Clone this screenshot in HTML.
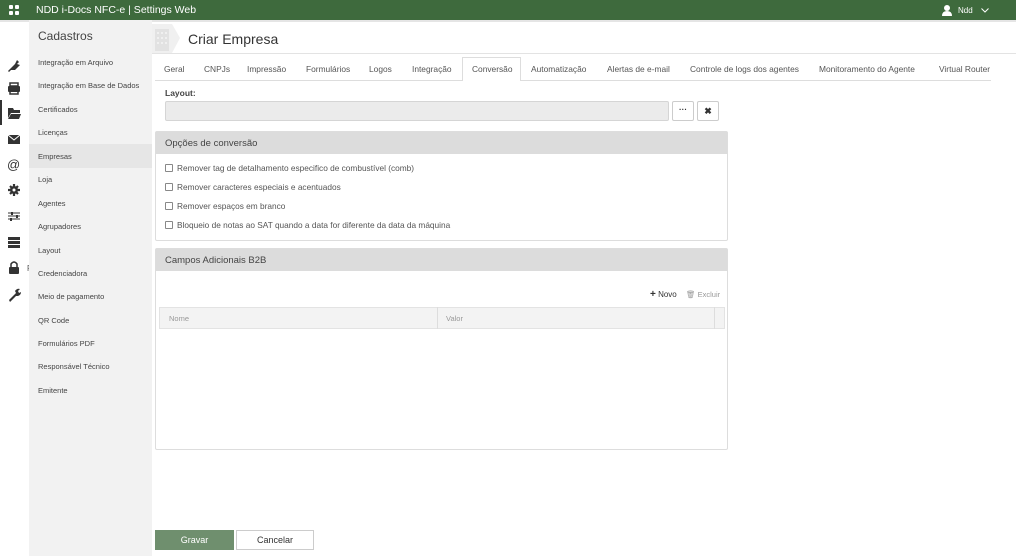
<!DOCTYPE html>
<html><head><meta charset="utf-8"><style>
*{box-sizing:border-box;margin:0;padding:0}
body{width:1016px;height:556px;overflow:hidden;background:#fff;font-family:"Liberation Sans",sans-serif;color:#333;position:relative}
.top{position:absolute;left:0;top:0;width:1016px;height:20px;background:#3e6a3d;color:#fff;font-size:12px}
.abs{position:absolute}
.side{position:absolute;left:29px;top:20px;width:123px;height:536px;background:#f2f2f2}
.side div{position:absolute;left:9px;font-size:7.5px;color:#444}
.tab{position:absolute;top:64px;font-size:8.4px;color:#555}
.panel{position:absolute;left:155px;width:573px;border:1px solid #ddd;border-radius:2px}
.ph{height:22px;background:#dcdcdc;font-size:9.5px;padding:6px 9px;color:#444}
.cb{position:absolute;left:9px;font-size:8.3px;color:#555}
.cb i{display:inline-block;width:8px;height:8px;border:1px solid #888;border-radius:1px;vertical-align:-1px;margin-right:4px;background:#fff}
</style></head><body>
<div class="top">
<svg class="abs" style="left:9px;top:5px" width="10" height="10"><rect x="0" y="0" width="4" height="4" rx="1" fill="#fff"/><rect x="6" y="0" width="4" height="4" rx="1" fill="#fff"/><rect x="0" y="6" width="4" height="4" rx="1" fill="#fff"/><rect x="6" y="6" width="4" height="4" rx="1" fill="#fff"/></svg>
<span class="abs" style="left:36px;top:4px;font-size:10.5px">NDD i-Docs NFC-e | Settings Web</span>
<svg class="abs" style="left:942px;top:5px" width="10" height="11"><circle cx="5" cy="3" r="3" fill="#fff"/><path d="M0 11 Q0 6 5 6 Q10 6 10 11Z" fill="#fff"/></svg>
<span class="abs" style="left:958px;top:6px;font-size:8px">Ndd</span>
<svg class="abs" style="left:981px;top:8px" width="8" height="5"><path d="M0.5 0.5 L4 4 L7.5 0.5" stroke="#fff" fill="none"/></svg>
</div>
<div class="abs" style="left:0;top:20px;width:1016px;height:2px;background:#e5e5e5"></div>
<div class="abs" style="left:0;top:100px;width:2px;height:25px;background:#333"></div>
<svg class="abs" style="left:0;top:50px" width="29" height="260" fill="#333">
<path d="M9 20 L15 14 L17 10 L19 12 L17 14 L20 15 L15 20 Z M8 21 L10 19 L11 20 L9 22Z"/>
<rect x="8" y="36" width="12" height="6" rx="1"/><rect x="10" y="33" width="8" height="3" fill="none" stroke="#333" stroke-width="1.5"/><rect x="10" y="41" width="8" height="3" fill="none" stroke="#333" stroke-width="1.5"/>
<path d="M8 58 L13 58 L14 60 L20 60 L20 63 L11 63 L8 68Z M11 64 L21 64 L19 69 L8 69Z"/>
<rect x="8" y="85" width="12" height="9"/><path d="M8 85 L14 90 L20 85" stroke="#fff" fill="none"/>
<text x="7" y="119" font-size="13" font-family="Liberation Sans">@</text>
<circle cx="14" cy="140" r="4"/><path d="M14 134 V146 M8 140 H20 M10 136 L18 144 M18 136 L10 144" stroke="#333" stroke-width="2.2"/><circle cx="14" cy="140" r="1.5" fill="#fff"/>
<path d="M8 163 H20 M8 166 H20 M8 169 H20" stroke="#333"/><rect x="11" y="162" width="2" height="3"/><rect x="16" y="165" width="2" height="3"/><rect x="10" y="168" width="2" height="3"/>
<rect x="8" y="187" width="12" height="3"/><rect x="8" y="191" width="12" height="3"/><rect x="8" y="195" width="12" height="3"/>
<rect x="9" y="217" width="10" height="7" rx="1"/><path d="M11 217 V214 Q14 210 17 214 V217" stroke="#333" stroke-width="1.5" fill="none"/>
<path d="M9 250 L16 243 L15 241 Q17 238 20 239 L18 241 L19 243 L21 242 Q21 245 18 246 L16 246 L10 252Z"/>
</svg>
<span class="abs" style="left:27px;top:264px;font-size:8px;color:#555">F</span>
<div class="side">
<div style="left:9px;top:9px;font-size:12px;color:#444">Cadastros</div>
<div class="abs" style="left:0;top:124px;width:123px;height:24px;background:#e6e6e6"></div>
<div style="top:38px">Integração em Arquivo</div>
<div style="top:61px">Integração em Base de Dados</div>
<div style="top:85px">Certificados</div>
<div style="top:108px">Licenças</div>
<div style="top:132px">Empresas</div>
<div style="top:155px">Loja</div>
<div style="top:179px">Agentes</div>
<div style="top:202px">Agrupadores</div>
<div style="top:226px">Layout</div>
<div style="top:249px">Credenciadora</div>
<div style="top:272px">Meio de pagamento</div>
<div style="top:296px">QR Code</div>
<div style="top:319px">Formulários PDF</div>
<div style="top:342px">Responsável Técnico</div>
<div style="top:366px">Emitente</div>
</div>
<svg class="abs" style="left:152px;top:24px" width="30" height="30"><path d="M0 0 H20 L28 14 L20 29 H0Z" fill="#f0f0f0"/><rect x="3" y="5" width="14" height="22" fill="#e2e2e2"/><g fill="#f0f0f0"><rect x="5" y="8" width="2" height="2"/><rect x="9" y="8" width="2" height="2"/><rect x="13" y="8" width="2" height="2"/><rect x="5" y="13" width="2" height="2"/><rect x="9" y="13" width="2" height="2"/><rect x="13" y="13" width="2" height="2"/><rect x="5" y="18" width="2" height="2"/><rect x="9" y="18" width="2" height="2"/><rect x="13" y="18" width="2" height="2"/></g></svg>
<div class="abs" style="left:188px;top:31px;font-size:14px;color:#333">Criar Empresa</div>
<div class="abs" style="left:152px;top:53px;width:864px;height:1px;background:#e3e3e3"></div>
<div class="abs" style="left:462px;top:57px;width:59px;height:24px;border:1px solid #ddd;border-bottom:none;background:#fff"></div>
<div class="abs" style="left:155px;top:80px;width:307px;height:1px;background:#ddd"></div>
<div class="abs" style="left:521px;top:80px;width:470px;height:1px;background:#ddd"></div>
<span class="tab" style="left:164px">Geral</span>
<span class="tab" style="left:204px">CNPJs</span>
<span class="tab" style="left:247px">Impressão</span>
<span class="tab" style="left:306px">Formulários</span>
<span class="tab" style="left:369px">Logos</span>
<span class="tab" style="left:412px">Integração</span>
<span class="tab" style="left:472px">Conversão</span>
<span class="tab" style="left:531px">Automatização</span>
<span class="tab" style="left:607px">Alertas de e-mail</span>
<span class="tab" style="left:690px">Controle de logs dos agentes</span>
<span class="tab" style="left:819px">Monitoramento do Agente</span>
<span class="tab" style="left:939px">Virtual Router</span>
<div class="abs" style="left:165px;top:88px;font-size:8.5px;font-weight:bold;color:#444">Layout:</div>
<div class="abs" style="left:165px;top:101px;width:504px;height:20px;background:#ebebeb;border:1px solid #d5d5d5;border-radius:2px"></div>
<div class="abs" style="left:672px;top:101px;width:22px;height:20px;border:1px solid #ccc;border-radius:2px;font-size:8px;text-align:center;line-height:16px;font-weight:bold">···</div>
<div class="abs" style="left:697px;top:101px;width:22px;height:20px;border:1px solid #ccc;border-radius:2px;font-size:9px;text-align:center;line-height:18px;font-weight:bold">✖</div>
<div class="panel" style="top:131px;height:110px"><div class="ph">Opções de conversão</div>
<div class="cb" style="top:31px"><i></i>Remover tag de detalhamento especifico de combustível (comb)</div>
<div class="cb" style="top:50px"><i></i>Remover caracteres especiais e acentuados</div>
<div class="cb" style="top:69px"><i></i>Remover espaços em branco</div>
<div class="cb" style="top:88px"><i></i>Bloqueio de notas ao SAT quando a data for diferente da data da máquina</div>
</div>
<div class="panel" style="top:248px;height:202px"><div class="ph">Campos Adicionais B2B</div>
<div class="abs" style="left:494px;top:40px;font-size:8px;color:#333"><b style="font-size:10px">+</b> Novo</div>
<div class="abs" style="left:530px;top:41px;font-size:7.5px;color:#999">🗑 Excluir</div>
<div class="abs" style="left:3px;top:58px;width:566px;height:22px;background:#f3f3f3;border:1px solid #e3e3e3"></div>
<div class="abs" style="left:281px;top:58px;width:1px;height:22px;background:#ddd"></div>
<div class="abs" style="left:558px;top:58px;width:1px;height:22px;background:#ddd"></div>
<div class="abs" style="left:13px;top:65px;font-size:7.5px;color:#999">Nome</div>
<div class="abs" style="left:290px;top:65px;font-size:7.5px;color:#999">Valor</div>
</div>
<div class="abs" style="left:155px;top:530px;width:79px;height:20px;background:#6f8f6e;color:#fff;font-size:9px;text-align:center;line-height:20px">Gravar</div>
<div class="abs" style="left:236px;top:530px;width:78px;height:20px;border:1px solid #ccc;font-size:9px;text-align:center;line-height:18px">Cancelar</div>
</body></html>
